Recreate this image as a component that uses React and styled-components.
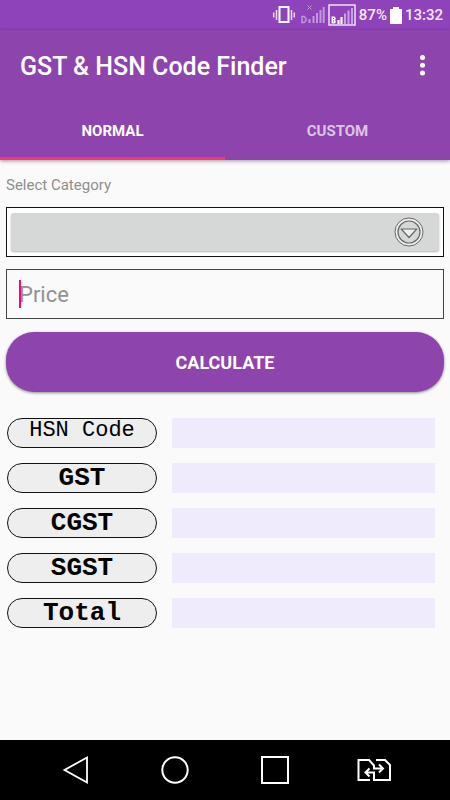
import React, { useState } from 'react';
import styled, { createGlobalStyle } from 'styled-components';

const results = [
  { id: 'hsn', label: 'HSN Code', small: true },
  { id: 'gst', label: 'GST' },
  { id: 'cgst', label: 'CGST' },
  { id: 'sgst', label: 'SGST' },
  { id: 'total', label: 'Total' },
];

const GlobalStyle = createGlobalStyle`
  * {
    box-sizing: border-box;
  }

  body {
    margin: 0;
    background: #fafafa;
    font-family: Roboto, 'Liberation Sans', sans-serif;
  }

  button, input, select {
    font-family: inherit;
  }
`;

const Screen = styled.div`
  display: flex;
  flex-direction: column;
  min-height: 100vh;
`;

const StatusBar = styled.div`
  display: flex;
  align-items: center;
  justify-content: flex-end;
  gap: 3px;
  height: 30px;
  padding-right: 7px;
  background: #8f43bb;
  color: #f5e9fb;
  font-size: 15px;
  font-weight: 500;

  svg {
    display: block;
  }
`;

const Header = styled.header`
  position: relative;
  background: #8e44ad;
  color: white;
  box-shadow: 0 1px 4px rgba(0, 0, 0, 0.4);
`;

const TitleBar = styled.div`
  display: flex;
  align-items: center;
  justify-content: space-between;
  height: 72px;
  padding: 0 16px 0 20px;
`;

const Title = styled.h1`
  margin: 0;
  font-size: 25px;
  font-weight: 500;
`;

const IconButton = styled.button`
  display: flex;
  padding: 0;
  border: none;
  background: none;
  color: white;
  cursor: pointer;
`;

const TabList = styled.div`
  display: flex;
`;

const Tab = styled.button`
  flex: 1;
  height: 58px;
  padding: 3px 0 0;
  border: none;
  border-bottom: 3px solid ${props => (props.$active ? '#ff2f7d' : 'transparent')};
  background: none;
  color: ${props => (props.$active ? 'white' : 'rgba(255, 255, 255, 0.7)')};
  font-size: 15px;
  font-weight: 700;
  text-transform: uppercase;
  cursor: pointer;
`;

const Form = styled.form`
  flex: 1;
  display: flex;
  flex-direction: column;
  padding: 16px 6px;
`;

const FieldLabel = styled.label`
  margin-bottom: 13px;
  color: #8f8f8f;
  font-size: 15px;
  line-height: 18px;
`;

const Field = styled.div`
  position: relative;
  height: 50px;
  margin-bottom: 12px;
  padding: ${props => (props.$raised ? '5px 4px' : '0')};
  border: 1px solid ${props => (props.$raised ? '#111' : '#444')};
  background: ${props => (props.$raised ? 'white' : 'transparent')};
`;

const CategorySelect = styled.select`
  display: block;
  width: 100%;
  height: 38px;
  padding: 0 50px 0 12px;
  border: none;
  border-radius: 3px;
  appearance: none;
  background: #d6d8d7;
  box-shadow: 0 1px 2px rgba(0, 0, 0, 0.3);
  font-size: 18px;
`;

const DropIcon = styled.svg`
  position: absolute;
  top: 9px;
  right: 19px;
  pointer-events: none;
`;

const PriceInput = styled.input`
  display: block;
  width: 100%;
  height: 100%;
  padding: 0 12px;
  border: none;
  outline: none;
  background: transparent;
  color: #222;
  font-size: 22px;
  caret-color: #ff0078;

  &::placeholder {
    color: #929292;
    opacity: 1;
  }
`;

const Cursor = styled.span`
  position: absolute;
  top: 10px;
  left: 12px;
  width: 2px;
  height: 28px;
  background: #ff0078;
  pointer-events: none;
`;

const CalculateButton = styled.button`
  height: 60px;
  margin: 1px 0 26px;
  border: none;
  border-radius: 28px;
  background: #8e44ad;
  color: white;
  box-shadow: 0 1px 3px rgba(0, 0, 0, 0.45);
  font-size: 18px;
  font-weight: 700;
  text-transform: uppercase;
  cursor: pointer;
`;

const Results = styled.div`
  display: grid;
  grid-template-columns: 150px 1fr;
  gap: 15px;
  padding: 0 9px 0 1px;
`;

const ResultLabel = styled.label`
  height: 30px;
  border: 1px solid #111;
  border-radius: 15px;
  background: #eee;
  color: #000;
  font-family: 'Liberation Mono', monospace;
  font-size: ${props => (props.$small ? '22px' : '26px')};
  font-weight: ${props => (props.$small ? 400 : 700)};
  line-height: ${props => (props.$small ? '24px' : '28px')};
  text-align: center;
`;

const ResultValue = styled.output`
  height: 30px;
  background: #efebfc;
`;

const NavBar = styled.nav`
  display: flex;
  height: 60px;
  padding: 0 25px;
  background: black;
`;

const NavButton = styled(IconButton)`
  flex: 1;
  align-items: center;
  justify-content: center;
`;

const StatusIcons = () => (
  <svg width="84" height="22" viewBox="0 0 84 22" fill="none" aria-hidden="true">
    <rect x="7.500" y="3" width="9" height="15" stroke="#fff" strokeWidth="2" />
    <path d="M4.500 6v10M19.500 6v10M1.700 8.500v5M22.300 8.500v5" stroke="#f1ddf8" strokeWidth="1.500" />
    <g opacity="0.45">
      <path d="M35.500 1.500l4 4M39.500 1.500l-4 4" stroke="#fff" />
      <path d="M30 12.500h2l2 2v2l-2 2h-2z" stroke="#fff" strokeWidth="1.500" />
      <path d="M37.500 15v4M41.500 12v7M45 9v10M48.500 6v13M51.700 3v16" stroke="#fff" strokeWidth="2" />
    </g>
    <rect x="57" y="1" width="26" height="20" stroke="#f0dff7" strokeWidth="1.500" />
    <path d="M59.500 12.500h3l1.500 2-1 1.500 1 2-1 1.500h-3.500z" fill="#fff" />
    <path d="M61 14.500h1M61 17h1" stroke="#8e44ad" />
    <path d="M66.500 16v4M69.500 13v7" stroke="#fff" strokeWidth="2.200" />
    <path d="M73 9.500V20M76.500 6.500V20M80 4v16" stroke="#fff" strokeWidth="2" opacity="0.5" />
  </svg>
);

const App = () => {
  const [tab, setTab] = useState('normal');

  return (
    <Screen>
      <GlobalStyle />
      <StatusBar>
        <StatusIcons />
        <span>87%</span>
        <svg width="12" height="18" viewBox="0 0 12 18" aria-hidden="true">
          <path d="M3 1h6v2h3v15H0V3h3z" fill="#fff" />
        </svg>
        <span>13:32</span>
      </StatusBar>
      <Header>
        <TitleBar>
          <Title>GST &amp; HSN Code Finder</Title>
          <IconButton type="button" aria-label="More options">
            <svg width="24" height="24" viewBox="0 0 24 24" fill="currentColor">
              <circle cx="12.500" cy="3.500" r="2.500" />
              <circle cx="12.500" cy="11.200" r="2.500" />
              <circle cx="12.500" cy="18.900" r="2.500" />
            </svg>
          </IconButton>
        </TitleBar>
        <TabList role="tablist">
          <Tab type="button" role="tab" aria-selected={tab === 'normal'} $active={tab === 'normal'} onClick={() => setTab('normal')}>Normal</Tab>
          <Tab type="button" role="tab" aria-selected={tab === 'custom'} $active={tab === 'custom'} onClick={() => setTab('custom')}>Custom</Tab>
        </TabList>
      </Header>
      <Form onSubmit={e => e.preventDefault()}>
        <FieldLabel htmlFor="category">Select Category</FieldLabel>
        <Field $raised>
          <CategorySelect id="category" />
          <DropIcon width="30" height="30" viewBox="0 0 30 30" fill="none" stroke="#666">
            <circle cx="15" cy="15" r="14" fill="#f0f0f0" />
            <circle cx="15" cy="15" r="11" fill="#d6d8d7" strokeWidth="1.200" />
            <path d="M7.200 12h15.600L15 20.500z" fill="#eee" strokeWidth="1.200" strokeLinejoin="round" />
          </DropIcon>
        </Field>
        <Field>
          <PriceInput type="text" inputMode="decimal" placeholder="Price" aria-label="Price" />
          <Cursor />
        </Field>
        <CalculateButton type="submit">Calculate</CalculateButton>
        <Results>
          {results.map(row => (
            <React.Fragment key={row.id}>
              <ResultLabel htmlFor={row.id} $small={row.small}>{row.label}</ResultLabel>
              <ResultValue id={row.id} />
            </React.Fragment>
          ))}
        </Results>
      </Form>
      <NavBar>
        <NavButton type="button" aria-label="Back">
          <svg width="28" height="30" viewBox="0 0 28 30" fill="none" stroke="#fff" strokeWidth="1.800">
            <path d="M26 2.500v25L3.500 15z" />
          </svg>
        </NavButton>
        <NavButton type="button" aria-label="Home">
          <svg width="28" height="28" viewBox="0 0 28 28" fill="none" stroke="#fff" strokeWidth="2">
            <circle cx="14" cy="14" r="12.700" />
          </svg>
        </NavButton>
        <NavButton type="button" aria-label="Recent apps">
          <svg width="28" height="28" viewBox="0 0 28 28" fill="none" stroke="#fff" strokeWidth="2">
            <rect x="1" y="1" width="26" height="26" />
          </svg>
        </NavButton>
        <NavButton type="button" aria-label="Switch SIM">
          <svg width="36" height="24" viewBox="0 0 36 24" fill="none" stroke="#fff" strokeWidth="2">
            <path d="M13 22H1.500V2H12l5 5.500V10.500H25.500M22 6.500l4 4-4 4" />
            <path d="M19 2h9l5 5v15H17v-7.500H9M12.500 10.500l-4 4 4 4" />
          </svg>
        </NavButton>
      </NavBar>
    </Screen>
  );
};

export default App;
